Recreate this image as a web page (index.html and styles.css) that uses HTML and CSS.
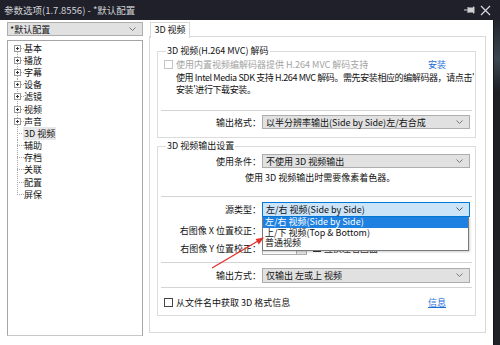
FILE: index.html
```html
<!DOCTYPE html>
<html lang="zh-CN">
<head>
  <meta charset="UTF-8" />
  <title>参数选项</title>
  <link rel="stylesheet" href="styles.css">
</head>
<body>
  <div class="screen">
    <div class="titlebar">
      <span class="title">参数选项(1.7.8556) - *默认配置</span>
      <span class="tb-icons">
        <svg width="11" height="8" viewBox="0 0 11 8"><path d="M0 4h4M4 1v6M4 2h5v4H4M9 1h1v6H9" fill="#cfd0d4" stroke="#cfd0d4" stroke-width="1"/></svg>
        <svg width="11" height="11" viewBox="0 0 11 11"><path d="M1 1l9 9M10 1l-9 9" stroke="#d8d9dc" stroke-width="1.2"/></svg>
      </span>
    </div>
    <div class="below">
      <div class="window">
        <div class="sidebar">
          <div class="combo side-combo">
            <span>*默认配置</span>
            <svg class="chev" width="7" height="4" viewBox="0 0 7 4"><path d="M0.5 0.5l3 3 3-3" fill="none" stroke="#777"/></svg>
          </div>
          <ul class="tree">
            <li class="node"><span class="tw first"><i class="box"></i></span>基本</li>
            <li class="node"><span class="tw"><i class="box"></i></span>播放</li>
            <li class="node"><span class="tw"><i class="box"></i></span>字幕</li>
            <li class="node"><span class="tw"><i class="box"></i></span>设备</li>
            <li class="node"><span class="tw"><i class="box"></i></span>滤镜</li>
            <li class="node"><span class="tw"><i class="box"></i></span>视频</li>
            <li class="node"><span class="tw"><i class="box"></i></span>声音</li>
            <li class="node"><span class="tw"></span><span class="sel">3D 视频</span></li>
            <li class="node"><span class="tw"></span>辅助</li>
            <li class="node"><span class="tw"></span>存档</li>
            <li class="node"><span class="tw"></span>关联</li>
            <li class="node"><span class="tw"></span>配置</li>
            <li class="node"><span class="tw last"></span>屏保</li>
          </ul>
        </div>

        <div class="main">
          <div class="tabs"><span class="tab">3D 视频</span></div>
          <div class="panel">
            <fieldset class="group g1">
              <legend>3D 视频(H.264 MVC) 解码</legend>
              <div class="check-row disabled">
                <span class="cb"></span>
                <span>使用内置视频编解码器提供 H.264 MVC 解码支持</span>
                <a class="link">安装</a>
              </div>
              <div class="note">使用 Intel Media SDK 支持 H.264 MVC 解码。需先安装相应的编解码器，请点击'<br>安装'进行下载安装。</div>
              <div class="sep sep-a"></div>
              <div class="field f-format">
                <span class="label">输出格式：</span>
                <div class="combo wide"><span>以半分辨率输出(Side by Side)左/右合成</span><svg class="chev" width="7" height="4" viewBox="0 0 7 4"><path d="M0.5 0.5l3 3 3-3" fill="none" stroke="#777"/></svg></div>
              </div>
            </fieldset>

            <fieldset class="group g2">
              <legend>3D 视频输出设置</legend>
              <div class="field f-cond">
                <span class="label">使用条件：</span>
                <div class="combo wide"><span>不使用 3D 视频输出</span><svg class="chev" width="7" height="4" viewBox="0 0 7 4"><path d="M0.5 0.5l3 3 3-3" fill="none" stroke="#777"/></svg></div>
              </div>
              <div class="hint">使用 3D 视频输出时需要像素着色器。</div>
              <div class="sep sep-b"></div>
              <div class="field f-src">
                <span class="label">源类型：</span>
                <div class="combo wide focus"><span>左/右 视频(Side by Side)</span><svg class="chev" width="7" height="4" viewBox="0 0 7 4"><path d="M0.5 0.5l3 3 3-3" fill="none" stroke="#555"/></svg></div>
                <ul class="dropdown">
                  <li class="opt active">左/右 视频(Side by Side)</li>
                  <li class="opt">上/下 视频(Top &amp; Bottom)</li>
                  <li class="opt">普通视频</li>
                </ul>
              </div>
              <div class="field f-x">
                <span class="label">右图像 X 位置校正：</span>
                <div class="spin"><span class="spin-btn"></span></div>
              </div>
              <div class="field f-y">
                <span class="label">右图像 Y 位置校正：</span>
                <div class="spin"><span class="spin-btn"></span></div>
                <span class="cb small"></span><span class="swap">互换左右画面</span>
              </div>
              <div class="sep sep-c"></div>
              <div class="field f-out">
                <span class="label">输出方式：</span>
                <div class="combo wide tall"><span>仅输出 左或上 视频</span><svg class="chev" width="7" height="4" viewBox="0 0 7 4"><path d="M0.5 0.5l3 3 3-3" fill="none" stroke="#777"/></svg></div>
              </div>
              <div class="sep sep-d"></div>
              <div class="check-row bottom-row">
                <span class="cb"></span>
                <span>从文件名中获取 3D 格式信息</span>
                <a class="link underline">信息</a>
              </div>
            </fieldset>
          </div>
        </div>
      </div>
      <div class="edge"></div>
    </div>

    <svg class="arrow" width="500" height="345" viewBox="0 0 500 345">
      <line x1="212" y1="268" x2="258" y2="241" stroke="#e4302b" stroke-width="1.3"/>
      <polygon points="264,237.5 258.8,244.4 255.6,239" fill="#e4302b"/>
    </svg>
  </div>
</body>
</html>
```

FILE: styles.css
```css
* {
  box-sizing: border-box;
}

body {
  margin: 0;
  background: #1d1e25;
  font-family: "Noto Sans CJK SC", "Noto Sans", sans-serif;
  font-size: 9px;
  color: #111;
}

.screen {
  position: relative;
  width: 500px;
  height: 345px;
  overflow: hidden;
}

.titlebar {
  height: 20px;
  background: #1f2029;
  display: flex;
  align-items: center;
  justify-content: space-between;
  padding: 0 9px 0 4px;
}

.title {
  color: #d2d3d6;
  font-size: 9.5px;
}

.tb-icons {
  display: flex;
  align-items: center;
  gap: 5px;
}

.below {
  display: flex;
  height: 325px;
}

.window {
  width: 493px;
  background: #fff;
  display: flex;
}

.edge {
  width: 7px;
  background: linear-gradient(to bottom, #22242b 0, #3a4650 12%, #1c1e24 22%, #202228 100%);
  border-left: 1px solid #15161a;
}

/* left side */

.sidebar {
  margin-left: 7px;
  width: 136px;
  padding-top: 2px;
}

.combo {
  display: flex;
  align-items: center;
  justify-content: space-between;
  height: 14px;
  padding: 0 6px 0 3px;
  background: #e1e1e1;
  border: 1px solid #adadad;
  white-space: nowrap;
}

.side-combo {
  padding-left: 2px;
}

.tree {
  list-style: none;
  margin: 4px 0 0;
  padding: 1px 0 0 6px;
  height: 296px;
  border: 1px solid #a6a6a6;
  border-bottom-color: #c8c8c8;
}

.node {
  display: flex;
  align-items: center;
  height: 12.2px;
  white-space: nowrap;
}

.tw {
  width: 10px;
  height: 100%;
  display: flex;
  align-items: center;
  background:
    repeating-linear-gradient(to bottom, #a8a8a8 0 1px, transparent 1px 2px) no-repeat 3px 0 / 1px 100%,
    repeating-linear-gradient(to right, #a8a8a8 0 1px, transparent 1px 2px) no-repeat 3px 50% / 7px 1px;
}

.tw.first {
  background:
    repeating-linear-gradient(to bottom, #a8a8a8 0 1px, transparent 1px 2px) no-repeat 3px 100% / 1px 50%,
    repeating-linear-gradient(to right, #a8a8a8 0 1px, transparent 1px 2px) no-repeat 3px 50% / 7px 1px;
}

.tw.last {
  background:
    repeating-linear-gradient(to bottom, #a8a8a8 0 1px, transparent 1px 2px) no-repeat 3px 0 / 1px 50%,
    repeating-linear-gradient(to right, #a8a8a8 0 1px, transparent 1px 2px) no-repeat 3px 50% / 7px 1px;
}

.box {
  width: 7px;
  height: 7px;
  border: 1px solid #9a9a9a;
  background:
    linear-gradient(#3a3a3a, #3a3a3a) center / 3px 1px no-repeat,
    linear-gradient(#3a3a3a, #3a3a3a) center / 1px 3px no-repeat,
    #fff;
}

.sel {
  background: #e8e8e8;
  padding: 0 1px;
  margin-left: -1px;
}

/* right side */

.main {
  margin-left: 6px;
  width: 337px;
}

.tabs {
  padding: 2px 0 0 1px;
  height: 17px;
  display: flex;
  position: relative;
  z-index: 1;
}

.tab {
  width: 40px;
  height: 16px;
  border: 1px solid #d9d9d9;
  border-bottom: none;
  background: #fff;
  text-align: center;
  line-height: 14px;
}

.panel {
  height: 297px;
  margin-top: -1px;
  border: 1px solid #d9d9d9;
  padding: 0 9px 0 7px;
}

.group {
  margin: 0;
  padding: 0 3px;
  border: 1px solid #dcdcdc;
  min-width: 0;
}

.group legend {
  padding: 0 1px;
  margin-left: 5px;
  line-height: 12px;
  height: 12px;
}

.g1 {
  margin-top: 8px;
  padding-bottom: 8px;
}

.g2 {
  margin-top: 2px;
  padding-bottom: 6px;
}

.check-row {
  display: flex;
  align-items: center;
  height: 14px;
  padding-left: 3px;
  white-space: nowrap;
}

.cb {
  width: 9px;
  height: 9px;
  border: 1px solid #333;
  background: #fff;
  margin-right: 3px;
  flex: none;
}

.disabled {
  color: #a3a3a3;
}

.disabled .cb {
  border-color: #c4c4c4;
}

.link {
  margin-left: auto;
  margin-right: 26px;
  color: #1a6fd6;
}

.underline {
  text-decoration: underline;
}

.note {
  margin-top: 1px;
  padding-left: 15px;
  line-height: 12px;
  white-space: nowrap;
  letter-spacing: -0.4px;
}

.sep {
  border-top: 1px solid #d4d4d4;
}

.sep-a { margin-top: 14px; }
.sep-b { margin-top: 12px; }
.sep-c { margin-top: 7px; }
.sep-d { margin-top: 5px; }

.field {
  display: flex;
  align-items: center;
  height: 14px;
  white-space: nowrap;
}

.label {
  width: 101px;
  text-align: right;
  padding-right: 1px;
  flex: none;
}

.wide {
  width: 208px;
}

.tall {
  height: 15px;
}

.focus {
  background: #cce4f7;
  border-color: #0078d7;
  height: 15px;
}

.f-format { margin-top: 4px; }
.f-cond { margin-top: 2px; }
.f-src { margin-top: 5px; position: relative; z-index: 2; }
.f-x { margin-top: 7px; }
.f-y { margin-top: 4px; }
.f-out { margin-top: 5px; }

.hint {
  margin-top: 4px;
  padding-left: 84px;
  line-height: 12px;
}

.dropdown {
  position: absolute;
  top: 15px;
  left: 101px;
  width: 207px;
  margin: 0;
  padding: 0 0 1px;
  list-style: none;
  background: #fff;
  border: 1px solid #7a7a7a;
  border-top: none;
  box-shadow: 1px 1px 2px rgba(0, 0, 0, 0.2);
}

.opt {
  height: 10.5px;
  line-height: 10.5px;
  padding-left: 2px;
}

.opt.active {
  background: #1e80e0;
  color: #fff;
}

.spin {
  width: 45px;
  height: 13px;
  border: 1px solid #adadad;
  background: #fff;
  display: flex;
  justify-content: flex-end;
  align-items: stretch;
}

.spin-btn {
  width: 10px;
  background: #e4e4e4;
  border-left: 1px solid #adadad;
  display: flex;
  align-items: center;
  justify-content: center;
}

.spin-btn::after {
  content: "";
  border-left: 3px solid transparent;
  border-right: 3px solid transparent;
  border-top: 3px solid #222;
}

.cb.small {
  margin-left: 6px;
  width: 8px;
  height: 8px;
}

.swap {
  color: #333;
}

.bottom-row {
  margin-top: 7px;
}

.bottom-row .cb {
  border-color: #444;
}

.arrow {
  position: absolute;
  left: 0;
  top: 0;
  z-index: 5;
  pointer-events: none;
}
```
